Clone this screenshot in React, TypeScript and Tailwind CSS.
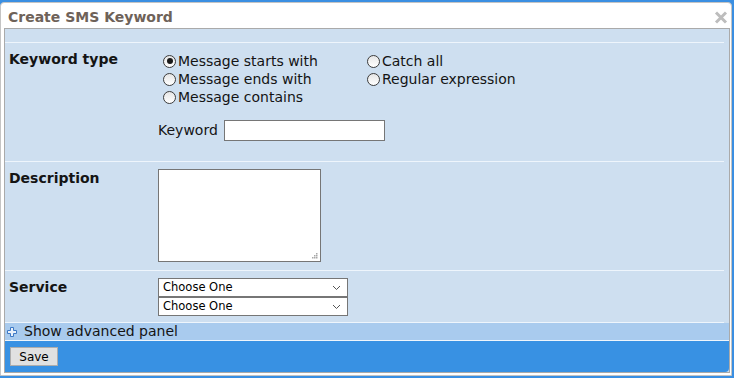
import React from "react";

function Radio({ checked }: { checked?: boolean }) {
  return (
    <span className="ml-[5px] mr-[2px] w-[13px] h-[13px] rounded-full border border-[#3c3c3c] bg-gradient-to-b from-[#e6e6e6] to-white flex items-center justify-center shrink-0">
      {checked && <span className="w-[6px] h-[6px] rounded-full bg-[#1a1a1a]" />}
    </span>
  );
}

function Option({ label, checked }: { label: string; checked?: boolean }) {
  return (
    <label className="flex items-center h-[18px] whitespace-nowrap">
      <Radio checked={checked} />
      <span>{label}</span>
    </label>
  );
}

function Select() {
  return (
    <div className="w-[190px] h-[19px] border border-[#767676] bg-white flex items-center justify-between pl-[4px] pr-[6px] text-[11.5px] text-black">
      <span>Choose One</span>
      <svg width="9" height="6" viewBox="0 0 9 6">
        <path d="M1 1 L4.5 4.5 L8 1" fill="none" stroke="#555" strokeWidth="1" />
      </svg>
    </div>
  );
}

function Line() {
  return <div className="h-px bg-[#eef5fc] mr-[5px]" />;
}

export default function App() {
  return (
    <div className="w-[734px] h-[378px] bg-[#3a8fe2] pt-[2px] overflow-hidden font-['DejaVu_Sans',sans-serif] text-[#141414]">
      <div className="w-[732px] h-[374px] bg-white border border-[#c4c4c4] rounded-t-[4px] flex flex-col pl-[3px] pr-[1px] pb-[2px]">
        <div className="h-[25px] flex items-center justify-between pl-[4px] pr-[2px] shrink-0">
          <span className="text-[14px] font-bold text-[#6e6259] leading-none mt-[3px]">
            Create SMS Keyword
          </span>
          <svg width="14" height="13" viewBox="0 0 14 13" className="mt-[3px]">
            <path d="M2 1.5 L12 11.5 M12 1.5 L2 11.5" stroke="#bdbdbd" strokeWidth="3" />
          </svg>
        </div>

        <div className="flex-1 border border-[#aaaaaa] bg-[#cedff0] flex flex-col">
          <div className="h-[13px]" />
          <Line />

          {/* keyword type */}
          <div className="h-[118px] flex text-[14px] pt-[9px]">
            <div className="w-[153px] pl-[4px] font-bold leading-[18px] -mt-[2px]">Keyword type</div>
            <div className="flex flex-col">
              <div className="flex">
                <div className="w-[204px] flex flex-col">
                  <Option label="Message starts with" checked />
                  <Option label="Message ends with" />
                  <Option label="Message contains" />
                </div>
                <div className="flex flex-col">
                  <Option label="Catch all" />
                  <Option label="Regular expression" />
                </div>
              </div>
              <div className="flex items-center mt-[14px]">
                <span className="w-[66px]">Keyword</span>
                <input className="w-[161px] h-[21px] border border-[#767676] bg-white outline-none" />
              </div>
            </div>
          </div>
          <Line />

          {/* description */}
          <div className="h-[108px] flex text-[14px] pt-[7px]">
            <div className="w-[153px] pl-[4px] font-bold leading-[18px]">Description</div>
            <div className="relative w-[163px] h-[93px] border border-[#767676] bg-white">
              <svg width="7" height="7" viewBox="0 0 7 7" className="absolute right-[2px] bottom-[2px]">
                <rect x="5" y="1" width="1.5" height="1.5" fill="#a8a8a8" />
                <rect x="3" y="3" width="1.5" height="1.5" fill="#a8a8a8" />
                <rect x="5" y="3" width="1.5" height="1.5" fill="#a8a8a8" />
                <rect x="1" y="5" width="1.5" height="1.5" fill="#a8a8a8" />
                <rect x="3" y="5" width="1.5" height="1.5" fill="#a8a8a8" />
                <rect x="5" y="5" width="1.5" height="1.5" fill="#a8a8a8" />
              </svg>
            </div>
          </div>
          <Line />

          {/* service */}
          <div className="h-[51px] flex text-[14px] pt-[7px]">
            <div className="w-[153px] pl-[4px] font-bold leading-[18px]">Service</div>
            <div className="flex flex-col">
              <Select />
              <Select />
            </div>
          </div>
          <Line />

          <div className="h-[17px] bg-[#a9cbee] flex items-center pl-[2px] text-[14px] shrink-0">
            <svg width="10" height="10" viewBox="0 0 10 10" className="mr-[7px]">
              <path
                d="M3.5 0.5 H6.5 V3.5 H9.5 V6.5 H6.5 V9.5 H3.5 V6.5 H0.5 V3.5 H3.5 Z"
                fill="#e9f1fb"
                stroke="#3d79c6"
                strokeWidth="1"
              />
            </svg>
            <span>Show advanced panel</span>
          </div>
          <div className="h-px bg-[#eef5fc]" />

          <div className="flex-1 bg-[#3891e3] rounded-br-[4px] pl-[5px] pt-[6px]">
            <button className="w-[48px] h-[19px] bg-[#e1e1e1] border border-[#adadad] text-[12px] text-black flex items-center justify-center">
              Save
            </button>
          </div>
        </div>
      </div>
    </div>
  );
}
